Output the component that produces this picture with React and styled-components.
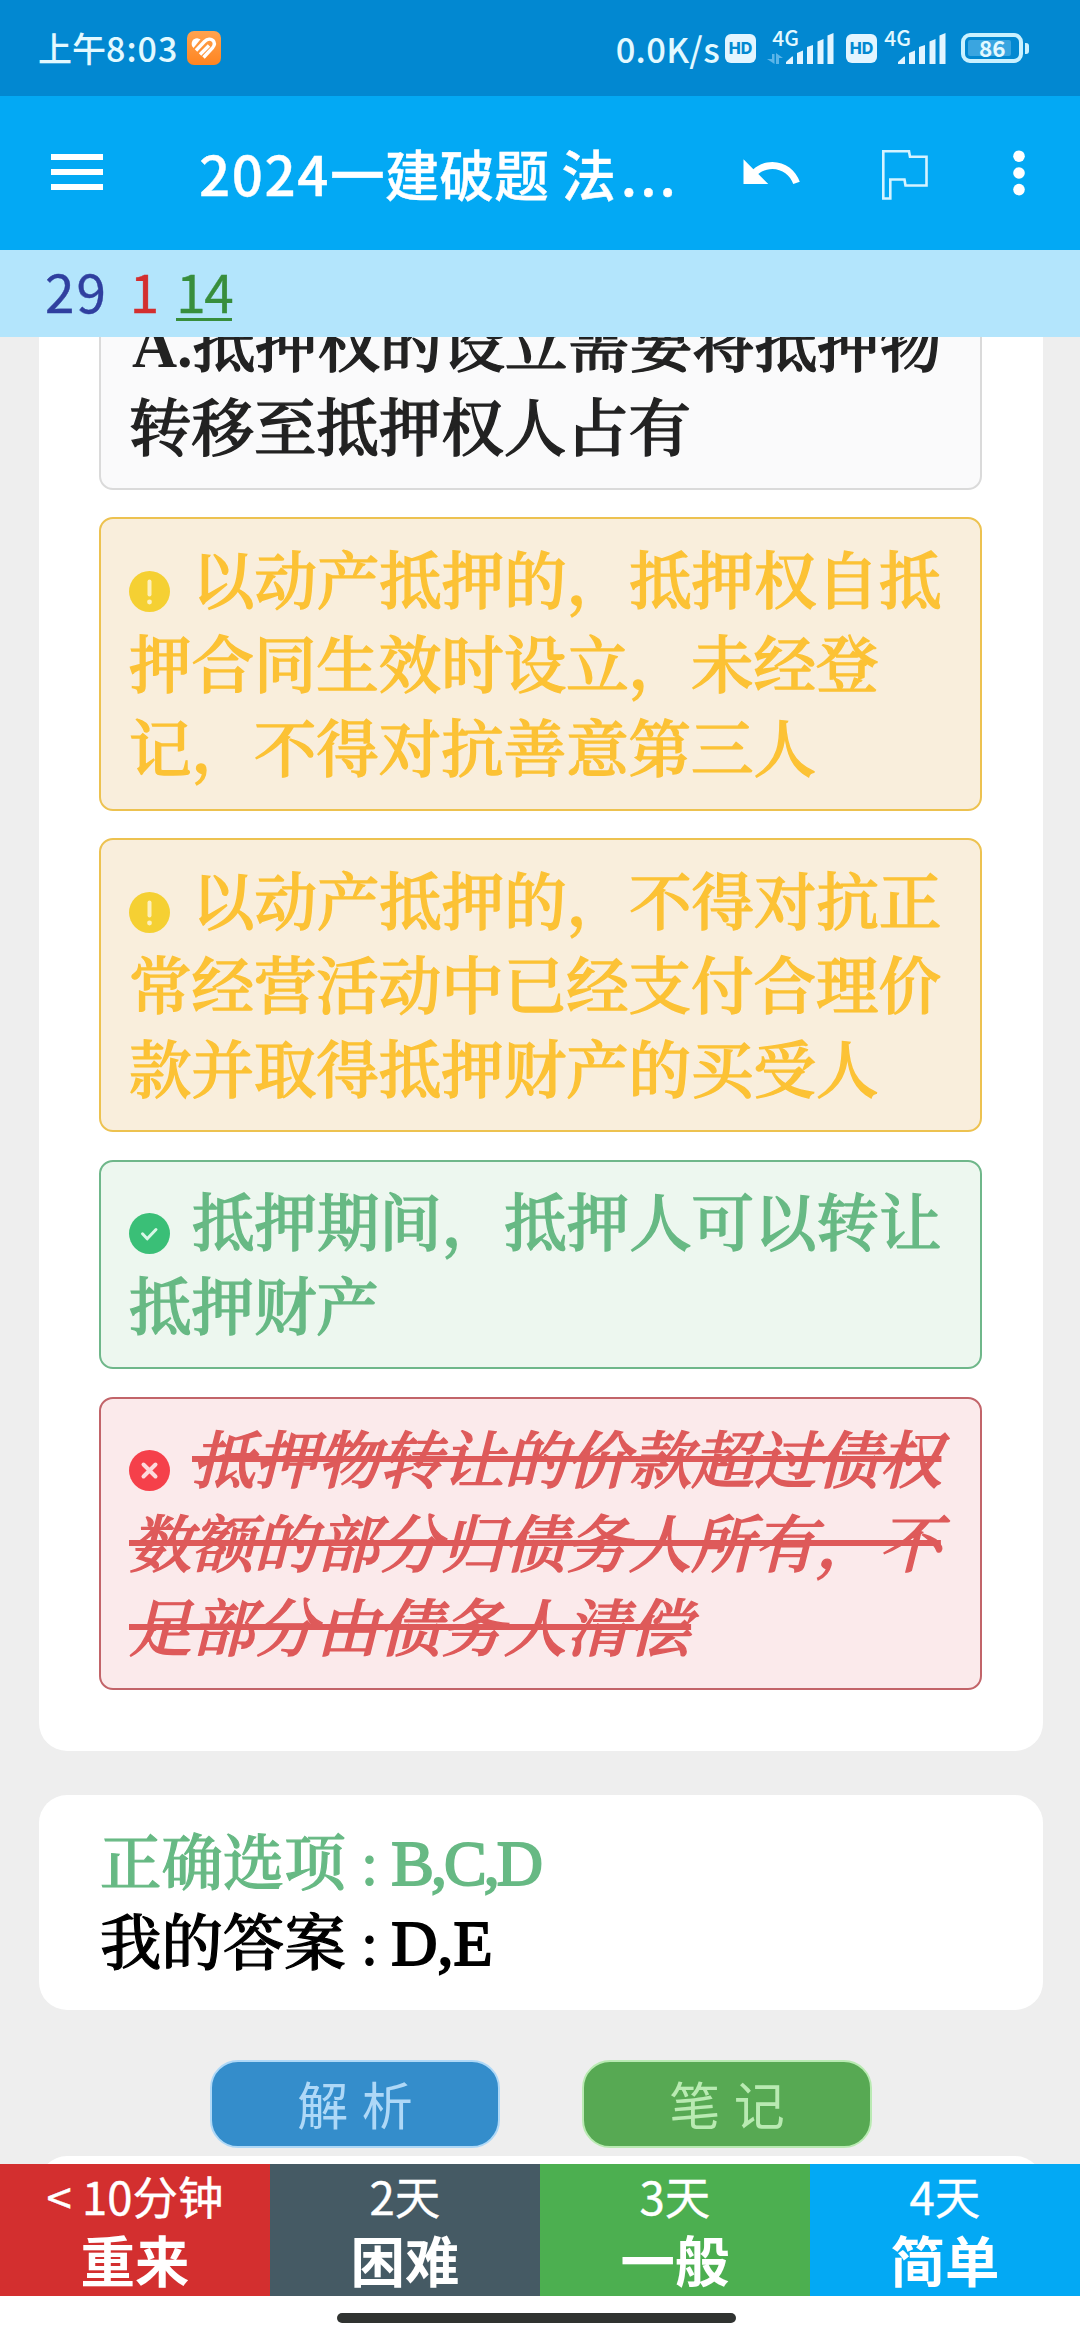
import styled, { createGlobalStyle, css } from "styled-components";

const options = [
  { type: "plain", prefix: "A.", text: "抵押权的设立需要将抵押物转移至抵押权人占有" },
  { type: "missed", text: "以动产抵押的，抵押权自抵押合同生效时设立，未经登记，不得对抗善意第三人" },
  { type: "missed", text: "以动产抵押的，不得对抗正常经营活动中已经支付合理价款并取得抵押财产的买受人" },
  { type: "right", text: "抵押期间，抵押人可以转让抵押财产" },
  { type: "wrong", text: "抵押物转让的价款超过债权数额的部分归债务人所有，不足部分由债务人清偿" },
];

const answers = [
  { time: "< 10分钟", label: "重来", color: "#d32f2f" },
  { time: "2天", label: "困难", color: "#455a64" },
  { time: "3天", label: "一般", color: "#4caf50" },
  { time: "4天", label: "简单", color: "#03a9f4" },
];

const themes = {
  plain: { text: "#222222", bg: "#fafafb", border: "#dadada" },
  missed: { text: "#fcc235", bg: "#f9eedc", border: "#edc250" },
  right: { text: "#67b984", bg: "#edf7ef", border: "#6fb78a" },
  wrong: { text: "#de5a5a", bg: "#fbeaeb", border: "#c26469" },
};

function App() {
  return (
    <Screen>
      <GlobalStyle />
      <StatusBar />
      <Toolbar />
      <Counts>
        <Count $color="#303f9f" $spacing="2px">
          29
        </Count>
        <Count $color="#d32f2f">1</Count>
        <Count $color="#388e3c" $spacing="-1.5px" $active>
          14
        </Count>
      </Counts>
      <Content>
        <QuestionCard>
          {options.map((option) => (
            <Option key={option.text} $type={option.type}>
              <OptionIcon type={option.type} />
              {option.prefix && <Prefix>{option.prefix}</Prefix>}
              <OptionText $struck={option.type === "wrong"}>{option.text}</OptionText>
            </Option>
          ))}
        </QuestionCard>
        <ResultCard>
          <Result $color="#67b984">
            正确选项 : <Letters $spacing="-3px">B,C,D</Letters>
          </Result>
          <Result $color="#000">
            我的答案 : <Letters $spacing="0">D,E</Letters>
          </Result>
        </ResultCard>
        <ButtonRow>
          <PillButton $bg="#348dcb" $line="#aed8f7">
            解 析
          </PillButton>
          <PillButton $bg="#57a953" $line="#b9eab2">
            笔 记
          </PillButton>
        </ButtonRow>
        <NoteCard />
      </Content>
      <AnswerBar>
        {answers.map((answer) => (
          <AnswerButton key={answer.label} $bg={answer.color}>
            <AnswerTime>{answer.time}</AnswerTime>
            <AnswerLabel>{answer.label}</AnswerLabel>
          </AnswerButton>
        ))}
      </AnswerBar>
      <GestureArea>
        <GestureBar />
      </GestureArea>
    </Screen>
  );
}

export default App;

function StatusBar() {
  return (
    <StatusContainer>
      <Clock>
        上午<ClockDigits>8:03</ClockDigits>
      </Clock>
      <svg width="34" height="34" viewBox="0 0 34 34">
        <defs>
          <linearGradient id="appIcon" x1="0" y1="0" x2="0" y2="1">
            <stop offset="0" stopColor="#ffa34f" />
            <stop offset="1" stopColor="#ff8420" />
          </linearGradient>
        </defs>
        <rect width="34" height="34" rx="7" fill="url(#appIcon)" />
        <path d="M5 15C3.500 10.500 7 6.500 11 7.500L13.500 8.200L6.500 17Z" fill="#fff" />
        <path
          d="M9 19.500L17.500 10.500C20.500 7.500 24 7.500 26 9.500C28.300 12 27.500 14.500 25.500 16.800L16.500 26.500M13 23.500L22 14.500"
          stroke="#fff"
          strokeWidth="3.400"
          fill="none"
        />
      </svg>
      <Spacer />
      <Speed>0.0K/s</Speed>
      <HdBadge>HD</HdBadge>
      <Signal data />
      <HdBadge>HD</HdBadge>
      <Signal />
      <Battery>
        <BatteryBody>
          <BatteryFill>86</BatteryFill>
        </BatteryBody>
        <BatteryTip />
      </Battery>
    </StatusContainer>
  );
}

function Signal({ data }) {
  return (
    <SignalContainer $wide={data}>
      <Network>4G</Network>
      <svg width="68" height="34" viewBox="0 0 68 34" fill="#e3f5ff">
        {data && (
          <g fill="#5cb5e8">
            <path d="M5 23H7.500V33L0 28H5Z" />
            <path d="M9 33V22L16 27H12V33Z" />
          </g>
        )}
        <path d="M19 33V31L25 25.500H26V33Z" />
        <path d="M30 33V22L36 19.500V33Z" />
        <path d="M40 33V16L46 14V33Z" />
        <path d="M50.500 33V10.500L56.500 8V33Z" />
        <path d="M60.500 33V4.500L66.500 2V33Z" />
      </svg>
    </SignalContainer>
  );
}

function Toolbar() {
  return (
    <ToolbarContainer>
      <MenuIcon>
        <span />
        <span />
        <span />
      </MenuIcon>
      <Title>
        <Year>2024</Year>一建破题 法<Dots>...</Dots>
      </Title>
      <UndoIcon width="66" height="66" viewBox="0 0 24 24" fill="#fff">
        <path d="M12.500 8c-2.650 0-5.050.990-6.900 2.600L2 7v9h9l-3.620-3.620c1.390-1.160 3.160-1.880 5.120-1.880 3.540 0 6.550 2.310 7.600 5.500l2.370-.780C21.080 11.030 17.150 8 12.500 8z" />
      </UndoIcon>
      <FlagIcon width="46" height="50" viewBox="0 0 46 50" fill="none" stroke="#d5f3ff" strokeWidth="2.600">
        <path d="M1.300 1.300H27L28 6.800H44.500V35.500H23.500L22.500 29.500H8.300V48.500H1.300Z" />
      </FlagIcon>
      <MoreIcon width="12" height="46" viewBox="0 0 12 46" fill="#fff">
        <circle cx="6" cy="6.200" r="5.800" />
        <circle cx="6" cy="23" r="5.800" />
        <circle cx="6" cy="39.600" r="5.800" />
      </MoreIcon>
    </ToolbarContainer>
  );
}

function OptionIcon({ type }) {
  if (type === "missed") {
    return (
      <Mark viewBox="0 0 41 41">
        <circle cx="20.500" cy="20.500" r="20.500" fill="#f5d033" />
        <path d="M20.500 10.500V23.500" stroke="#fdf0bd" strokeWidth="4" strokeLinecap="round" />
        <circle cx="20.500" cy="31" r="2.400" fill="#fdf0bd" />
      </Mark>
    );
  }
  if (type === "right") {
    return (
      <Mark viewBox="0 0 41 41">
        <circle cx="20.500" cy="20.500" r="20.500" fill="#3abf77" />
        <path
          d="M13.500 20.800L18.200 25.800L27 16.500"
          stroke="#d9f7e6"
          strokeWidth="3"
          strokeLinecap="round"
          strokeLinejoin="round"
          fill="none"
        />
      </Mark>
    );
  }
  if (type === "wrong") {
    return (
      <Mark viewBox="0 0 41 41">
        <circle cx="20.500" cy="20.500" r="20.500" fill="#f5404a" />
        <path d="M14.500 14.500L26.500 26.500M26.500 14.500L14.500 26.500" stroke="#fdd9dc" strokeWidth="4" strokeLinecap="round" />
      </Mark>
    );
  }
  return null;
}

const GlobalStyle = createGlobalStyle`
  * {
    box-sizing: border-box;
  }
  body {
    margin: 0;
    background-color: #eeeeee;
  }
`;

const Screen = styled.div`
  display: flex;
  flex-direction: column;
  width: 1080px;
  height: 2340px;
  overflow: hidden;
  background-color: #eeeeee;
  font-family: "Noto Sans CJK SC", sans-serif;
`;

const StatusContainer = styled.div`
  display: flex;
  align-items: center;
  height: 96px;
  flex-shrink: 0;
  padding: 0 51px 0 38px;
  background-color: #0288d1;
  color: #e3f9ff;
`;

const Clock = styled.div`
  width: 149px;
  font-size: 34px;
  font-weight: 500;
  line-height: 96px;
  white-space: nowrap;
`;

const ClockDigits = styled.span`
  letter-spacing: 1px;
`;

const Spacer = styled.div`
  flex: 1;
`;

const Speed = styled.div`
  font-size: 34.5px;
  font-weight: 500;
  letter-spacing: 0.3px;
  line-height: 96px;
  margin-right: 5px;
`;

const HdBadge = styled.div`
  width: 31px;
  height: 29px;
  border-radius: 6px;
  background-color: #e3f5ff;
  color: #0288d1;
  font-family: "Inter", sans-serif;
  font-size: 16px;
  font-weight: 800;
  line-height: 29px;
  text-align: center;
`;

const SignalContainer = styled.div`
  position: relative;
  display: flex;
  justify-content: flex-end;
  width: ${(p) => (p.$wide ? "79px" : "70px")};
  height: 34px;
  margin-right: ${(p) => (p.$wide ? "11px" : "14px")};
  svg {
    flex-shrink: 0;
  }
`;

/* sits over the short bars of the signal icon */
const Network = styled.div`
  position: absolute;
  top: -2px;
  right: 36px;
  font-size: 21px;
  font-weight: 500;
  line-height: 16px;
`;

const Battery = styled.div`
  display: flex;
  align-items: center;
  gap: 2px;
`;

const BatteryBody = styled.div`
  width: 62px;
  height: 30px;
  padding: 3px;
  border: 4px solid #c9f1ff;
  border-radius: 9px;
`;

const BatteryFill = styled.div`
  width: 43px;
  height: 16px;
  padding-left: 11px;
  border-radius: 2px;
  background-color: #3aa5e0;
  color: #e3f9ff;
  font-size: 22.5px;
  font-weight: 700;
  line-height: 15px;
`;

const BatteryTip = styled.div`
  width: 4px;
  height: 11px;
  border-radius: 0 3px 3px 0;
  background-color: #c9f1ff;
`;

const ToolbarContainer = styled.div`
  display: flex;
  align-items: center;
  height: 154px;
  flex-shrink: 0;
  padding: 0 55px 0 51px;
  background-color: #03a9f4;
`;

const MenuIcon = styled.div`
  display: flex;
  flex-direction: column;
  gap: 9px;
  width: 52px;
  margin-top: -3px;
  span {
    height: 6px;
    background-color: #fff;
  }
`;

const Title = styled.div`
  width: 479px;
  margin-left: 96px;
  color: #fff;
  font-size: 54.7px;
  font-weight: 500;
  line-height: 80px;
  white-space: nowrap;
  -webkit-text-stroke: 0.4px #fff;
`;

const Year = styled.span`
  letter-spacing: 1.6px;
`;

const Dots = styled.span`
  letter-spacing: 3px;
  margin-left: 5px;
`;

const UndoIcon = styled.svg`
  margin-left: 60px;
`;

const FlagIcon = styled.svg`
  margin-left: 78px;
  margin-top: 3px;
`;

const MoreIcon = styled.svg`
  margin-left: auto;
`;

const Counts = styled.div`
  display: flex;
  align-items: flex-start;
  height: 87px;
  flex-shrink: 0;
  padding: 8px 0 0 45px;
  gap: 22px;
  background-color: #b3e5fc;
`;

const Count = styled.div`
  height: 63px;
  color: ${(p) => p.$color};
  font-size: 53px;
  letter-spacing: ${(p) => p.$spacing || "0"};
  line-height: 65px;
  -webkit-text-stroke: 0.4px ${(p) => p.$color};
  ${(p) =>
    p.$active &&
    css`
      border-bottom: 3px solid ${p.$color};
      margin-left: -5px;
    `}
`;

const Content = styled.div`
  display: flex;
  flex-direction: column;
  height: 1827px;
  flex-shrink: 0;
  padding: 0 37px 0 39px;
  overflow: hidden;
`;

const Card = styled.div`
  flex-shrink: 0;
  border-radius: 28px;
  background-color: #fff;
`;

/* the list is scrolled, the top of the card is behind the bar */
const QuestionCard = styled(Card)`
  display: flex;
  flex-direction: column;
  gap: 27.7px;
  margin-top: -87px;
  padding: 30px 61px 60.5px 60px;
`;

const Option = styled.div`
  padding: 15.5px 27px 22px 28px;
  border: 2px solid ${(p) => themes[p.$type].border};
  border-radius: 14px;
  background-color: ${(p) => themes[p.$type].bg};
  color: ${(p) => themes[p.$type].text};
  font-family: "Noto Serif CJK SC", "Noto Sans CJK SC", serif;
  font-size: 62.46px;
  font-weight: 500;
  line-height: 84px;
  -webkit-text-stroke: 1.4px ${(p) => themes[p.$type].text};
`;

const Prefix = styled.span`
  padding-left: 3px;
  font-family: "Liberation Serif", serif;
  font-weight: 700;
  line-height: 0;
  -webkit-text-stroke: 0;
`;

const OptionText = styled.span`
  ${(p) =>
    p.$struck &&
    css`
      font-style: italic;
      text-decoration: line-through;
      text-decoration-thickness: 6px;
    `}
`;

const Mark = styled.svg`
  width: 41px;
  height: 41px;
  margin-right: 22px;
  vertical-align: -8px;
`;

const ResultCard = styled(Card)`
  height: 215px;
  margin-top: 44px;
  padding: 29px 61px 0;
`;

const Result = styled.div`
  color: ${(p) => p.$color};
  font-family: "Liberation Serif", "Noto Serif CJK SC", "Noto Sans CJK SC", serif;
  font-size: 61.4px;
  font-weight: 500;
  line-height: 80px;
  white-space: nowrap;
  -webkit-text-stroke: 1.2px ${(p) => p.$color};
`;

const Letters = styled.span`
  margin-left: -2px;
  font-size: 64px;
  line-height: 0;
  letter-spacing: ${(p) => p.$spacing};
  -webkit-text-stroke-width: 2px;
`;

const ButtonRow = styled.div`
  display: flex;
  justify-content: center;
  flex-shrink: 0;
  gap: 82px;
  margin-top: 50px;
`;

const PillButton = styled.button`
  width: 290px;
  height: 88px;
  padding: 0 0 2px;
  border: 2px solid ${(p) => p.$line};
  border-radius: 28px;
  background-color: ${(p) => p.$bg};
  color: ${(p) => p.$line};
  font-family: "Noto Sans CJK SC", sans-serif;
  font-size: 51px;
  line-height: 78px;
  word-spacing: 2px;
`;

const NoteCard = styled(Card)`
  height: 120px;
  margin-top: 8px;
`;

const AnswerBar = styled.div`
  display: grid;
  grid-template-columns: repeat(4, 1fr);
  height: 132px;
  flex-shrink: 0;
`;

const AnswerButton = styled.div`
  display: flex;
  flex-direction: column;
  align-items: center;
  background-color: ${(p) => p.$bg};
  color: #fff;
  white-space: nowrap;
`;

const AnswerTime = styled.div`
  font-size: 45.5px;
  line-height: 62px;
  -webkit-text-stroke: 0.4px #fff;
`;

const AnswerLabel = styled.div`
  font-size: 54.4px;
  font-weight: 700;
  line-height: 65px;
`;

const GestureArea = styled.div`
  display: flex;
  justify-content: center;
  flex: 1;
  padding: 17px 7px 0 0;
  background-color: #fff;
`;

const GestureBar = styled.div`
  width: 399px;
  height: 10px;
  border-radius: 5px;
  background-color: #303331;
`;
